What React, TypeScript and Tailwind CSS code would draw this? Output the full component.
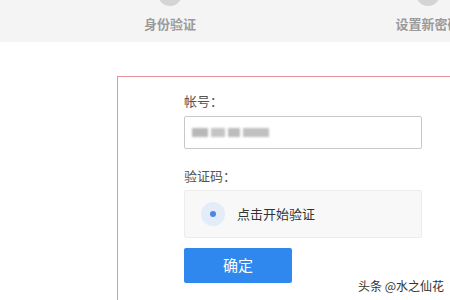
export default function App() {
  return (
    <div
      className="relative w-[450px] h-[300px] overflow-hidden bg-white"
      style={{ fontFamily: '"Noto Sans CJK SC", "Noto Sans", sans-serif' }}
    >
      {/* step header */}
      <div className="flex h-[42px] bg-[#f4f4f4]">
        <div className="ml-[120px] flex w-[100px] shrink-0 flex-col items-center">
          <div className="-mt-[18px] h-6 w-6 rounded-full bg-[#d4d4d4]" />
          <span className="mt-[10px] whitespace-nowrap text-[13px] leading-[15px] font-bold text-[#9a9a9a]">身份验证</span>
        </div>
        <div className="ml-[158px] flex w-[100px] shrink-0 flex-col items-center">
          <div className="-mt-[18px] h-6 w-6 rounded-full bg-[#d4d4d4]" />
          <span className="mt-[10px] whitespace-nowrap text-[13px] leading-[15px] font-bold text-[#9a9a9a]">设置新密码</span>
        </div>
      </div>

      {/* form */}
      <div className="pt-[34px] pl-[117px]">
        <div className="h-[260px] border border-r-0 border-[#e7939c] pt-[15px] pl-[66px]">
          <div className="text-[13px] leading-[18px] text-[#555]">帐号：</div>
          <div className="mt-[6px] flex h-[33px] w-[238px] items-center rounded-[2px] border border-[#c8c8c8] pl-[7px]">
            <div className="flex gap-[3px] blur-[1px]">
              <div className="h-[9px] w-[16px] bg-[#b8b8b8]" />
              <div className="h-[9px] w-[14px] bg-[#c4c4c4]" />
              <div className="h-[9px] w-[12px] bg-[#bcbcbc]" />
              <div className="h-[9px] w-[26px] bg-[#c0c0c0]" />
            </div>
          </div>

          <div className="mt-[18px] text-[13px] leading-[18px] text-[#555]">验证码：</div>
          <div className="mt-[5px] flex h-[48px] w-[238px] items-center rounded-[2px] border border-[#ececec] bg-[#f8f8f8] pl-[16px]">
            <div className="flex h-6 w-6 items-center justify-center rounded-full bg-[#e3ecf9]">
              <div className="h-[6px] w-[6px] rounded-full bg-[#4f84e4]" />
            </div>
            <span className="ml-[12px] text-[13px] text-[#333]">点击开始验证</span>
          </div>

          <button className="mt-[10px] flex h-[35px] w-[108px] items-center justify-center rounded-[2px] bg-[#2f88ee] text-[15px] text-white">
            确定
          </button>
        </div>
      </div>

      {/* watermark */}
      <div className="absolute left-[358px] top-[278px] whitespace-nowrap text-[12px] leading-[15px] text-[#333]">头条 @水之仙花</div>
    </div>
  );
}
